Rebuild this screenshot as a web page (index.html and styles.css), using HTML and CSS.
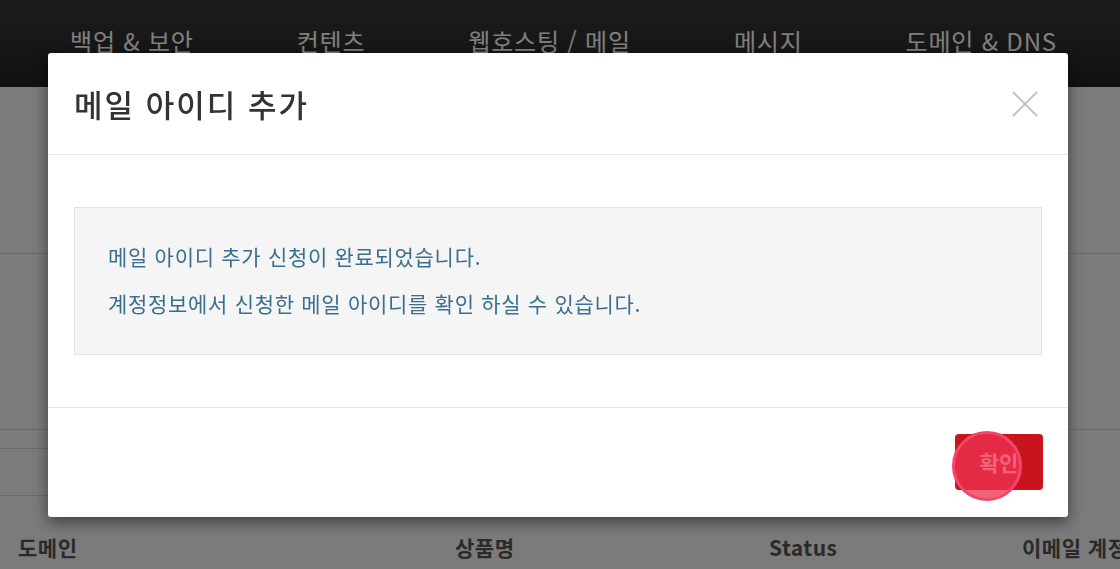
FILE: index.html
```html
<!DOCTYPE html>
<html lang="ko">
<head>
    <meta charset="UTF-8">
    <meta name="viewport" content="width=device-width, initial-scale=1.0">
    <title>메일 아이디 추가</title>
    <link rel="stylesheet" href="styles.css">
</head>
<body>
    <header class="gnb">
        <nav class="gnb-menu">
            <a href="#">백업 &amp; 보안</a>
            <a href="#">컨텐츠</a>
            <a href="#">웹호스팅 / 메일</a>
            <a href="#">메시지</a>
            <a href="#">도메인 &amp; DNS</a>
        </nav>
    </header>

    <main class="page">
        <div class="summary"></div>
        <div class="panel"></div>
        <div class="list">
            <div class="list-row short"></div>
            <div class="list-row"></div>
        </div>
        <div class="thead">
            <span>도메인</span>
            <span>상품명</span>
            <span>Status</span>
            <span>이메일 계정</span>
        </div>
    </main>

    <div class="dim"></div>

    <div class="modal">
        <div class="modal-header">
            <h2 class="modal-title">메일 아이디 추가</h2>
            <button class="modal-close" type="button" aria-label="닫기">
                <svg width="26" height="26" viewBox="0 0 26 26">
                    <path d="M1 1 L25 25 M25 1 L1 25" stroke="#c4c4c4" stroke-width="2" fill="none"/>
                </svg>
            </button>
        </div>
        <div class="modal-body">
            <div class="notice">
                <p>메일 아이디 추가 신청이 완료되었습니다.</p>
                <p>계정정보에서 신청한 메일 아이디를 확인 하실 수 있습니다.</p>
            </div>
        </div>
        <div class="modal-footer">
            <button class="btn-confirm" type="button">확인
                <span class="tap"></span>
            </button>
        </div>
    </div>
</body>
</html>
```

FILE: styles.css
```css
body {
    margin: 0;
    padding: 0;
    background-color: #f6f6f6;
    font-family: "Noto Sans CJK KR", "Noto Sans", sans-serif;
    overflow: hidden;
}
.gnb {
    height: 87px;
    background: linear-gradient(#3a3a3a, #222);
}
.gnb-menu {
    display: flex;
    gap: 103px;
    padding-left: 70px;
    padding-top: 23px;
}
.gnb-menu a {
    color: #fff;
    font-size: 24px;
    letter-spacing: 0.8px;
    line-height: 36px;
    text-decoration: none;
    white-space: nowrap;
}
.summary {
    height: 166px;
    border-bottom: 1px solid #d5d5d5;
}
.panel {
    height: 175px;
    border-bottom: 1px solid #d5d5d5;
}
.list {
    width: 600px;
}
.list-row {
    height: 46px;
    border-bottom: 1px solid #d5d5d5;
}
.list-row.short {
    height: 18px;
}
.thead {
    display: grid;
    grid-template-columns: 437px 314px 253px 1fr;
    padding-left: 18px;
    margin-top: 30px;
    height: 42px;
    line-height: 42px;
    font-size: 21px;
    letter-spacing: 0.5px;
    font-weight: bold;
    color: #555;
    white-space: nowrap;
}
.dim {
    position: fixed;
    inset: 0;
    background-color: rgba(0, 0, 0, 0.5);
}
.modal {
    position: fixed;
    left: 48px;
    top: 53px;
    width: 1020px;
    background-color: #fff;
    border-radius: 3px;
    box-shadow: 0 5px 15px rgba(0, 0, 0, 0.5);
}
.modal-header {
    display: flex;
    align-items: center;
    justify-content: space-between;
    height: 101px;
    padding: 0 30px 0 26px;
    border-bottom: 1px solid #e5e5e5;
}
.modal-title {
    margin: 0;
    font-size: 31px;
    font-weight: 500;
    color: #333;
    letter-spacing: 2px;
}
.modal-close {
    border: none;
    background: none;
    padding: 0;
    width: 26px;
    height: 26px;
    cursor: pointer;
}
.modal-close svg {
    display: block;
}
.modal-body {
    padding: 52px 26px 52px;
}
.notice {
    background-color: #f5f5f5;
    border: 1px solid #e3e3e3;
    padding: 25px 33px 27px;
    color: #3b6f90;
    font-size: 21px;
    letter-spacing: 0.7px;
    line-height: 47px;
}
.notice p {
    margin: 0;
}
.modal-footer {
    display: flex;
    justify-content: flex-end;
    padding: 26px 25px 27px;
    border-top: 1px solid #e5e5e5;
}
.btn-confirm {
    position: relative;
    width: 88px;
    height: 56px;
    border: none;
    border-radius: 4px;
    background-color: #c8141d;
    color: #fff;
    font-family: inherit;
    font-size: 21px;
    font-weight: bold;
    cursor: pointer;
}
.tap {
    position: absolute;
    left: -3px;
    top: -3px;
    width: 64px;
    height: 64px;
    border-radius: 50%;
    border: 3px solid #f2466a;
    background-color: rgba(238, 50, 82, 0.76);
}
```
